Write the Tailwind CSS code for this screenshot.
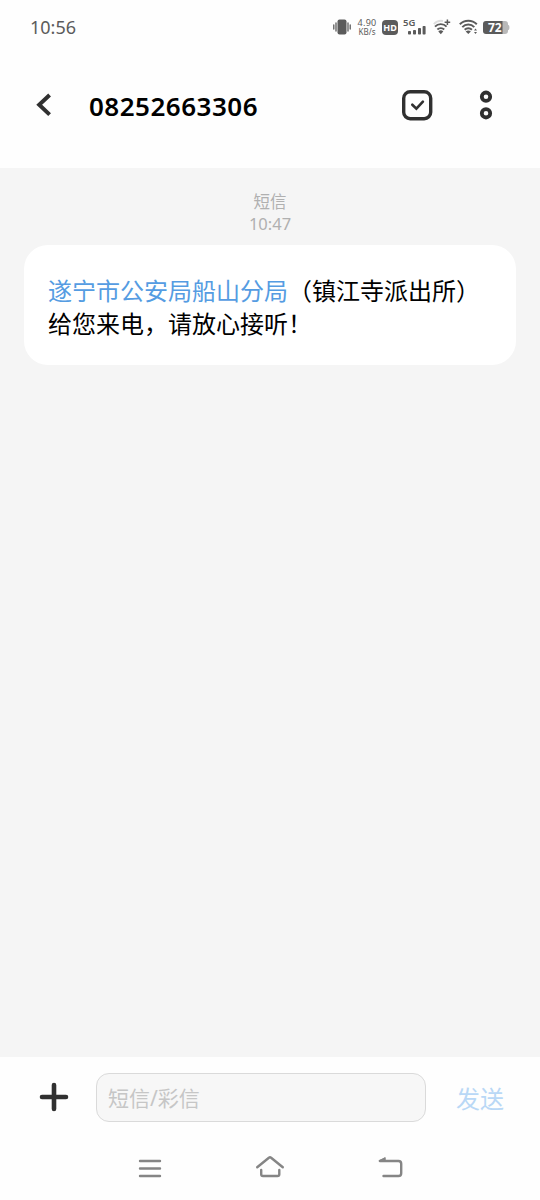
<!DOCTYPE html>
<html lang="zh-CN">
<head>
  <meta charset="UTF-8">
  <meta name="viewport" content="width=device-width, initial-scale=1.0">
  <title>08252663306</title>
  <script src="https://cdn.jsdelivr.net/npm/@tailwindcss/browser@4"></script>
</head>
<body class="bg-[#f5f5f5] font-['Noto_Sans','Noto_Sans_CJK_SC',sans-serif]">
  <div class="w-[540px] h-[1200px] flex flex-col overflow-hidden">

    <!-- status bar + title -->
    <header class="h-[168px] bg-[#fefefe] shrink-0">
      <div class="h-[54px] flex items-center pl-[30px] pr-[30px] text-[#5b5b5b]">
        <span class="text-[18px] leading-none mr-auto">10:56</span>

        <svg class="w-[18px] h-4" viewBox="0 0 18 16" fill="currentColor">
          <rect x="4.5" y="0.5" width="9" height="15" rx="2"/>
          <path d="M3 4v8M.8 6v4M15 4v8M17.2 6v4" stroke="currentColor" stroke-width="1.3" stroke-linecap="round"/>
        </svg>

        <div class="w-5 ml-1.5 flex flex-col items-center text-[9px] leading-[9px] whitespace-nowrap">
          <p class="tracking-[0.3px]">4.90</p>
          <p class="text-[8px]">KB/s</p>
        </div>

        <div class="w-4 h-[15px] ml-[5px] rounded-[4px] bg-[#5b5b5b] text-white text-[9px] font-bold flex items-center justify-center leading-none">HD</div>

        <div class="relative w-[23px] h-4 ml-[5px]">
          <span class="absolute left-0 top-0 text-[9.500px] font-semibold leading-[8px]">5G</span>
          <svg class="w-[23px] h-4" viewBox="0 0 23 16" fill="currentColor">
            <rect x="5" y="12" width="3" height="3.5" rx=".8"/>
            <rect x="10" y="11" width="3" height="4.5" rx=".8"/>
            <rect x="15" y="9" width="3" height="6.5" rx=".8"/>
            <rect x="19.6" y="7" width="3" height="8.5" rx=".8"/>
          </svg>
        </div>

        <svg class="w-[18px] h-4 ml-[7px]" viewBox="0 0 18 16" fill="none" stroke="currentColor" stroke-width="1.9">
          <path d="M.8 5.1A10 10 0 0 1 10 2" stroke="#dedede"/>
          <path d="M2 7.600a8 8 0 0 1 11.600 0M4.400 10.500a4.800 4.800 0 0 1 6.800 0"/>
          <path d="M5.300 12.500a3.600 3.600 0 0 1 5 0L7.800 15.300z" fill="currentColor" stroke="none"/>
          <path d="M14.4.5v5.6M11.6 3.3h5.6" stroke-width="1.5"/>
        </svg>

        <svg class="w-[19px] h-4 ml-2" viewBox="0 0 19 16" fill="none" stroke="currentColor" stroke-width="2">
          <path d="M.8 5.2a12 12 0 0 1 17 0M3.3 8.1a8.4 8.4 0 0 1 12 0M5.7 10.8a5 5 0 0 1 7.2 0"/>
          <path d="M6.7 12.6a4 4 0 0 1 5.2 0L9.3 15z" fill="currentColor" stroke="none"/>
          <path d="M15 11.6l1.5-2 1.5 2zM15 13l1.5 2 1.5-2z" fill="currentColor" stroke="none"/>
        </svg>

        <div class="relative w-[27px] h-[13px] ml-[5px]">
          <svg class="w-[27px] h-[13px]" viewBox="0 0 27 13">
            <path d="M19 0h3a3 3 0 0 1 3 3v.8l1.1.7q.7 2 0 4l-1.1.7v.8a3 3 0 0 1-3 3h-3z" fill="#b9b9b9"/>
            <path d="M3 0h16.500v13H3a3 3 0 0 1-3-3V3a3 3 0 0 1 3-3z" fill="#5b5b5b"/>
          </svg>
          <span class="absolute left-[5px] top-0 text-[12px] font-bold leading-[13px] text-white">72</span>
        </div>
      </div>

      <div class="h-[102px] flex items-center pl-9 pr-[47px] text-[#303030]">
        <svg class="w-4 h-6" viewBox="0 0 16 24" fill="none" stroke="currentColor" stroke-width="4">
          <path d="M13.600 2L3.200 11.800l10.400 9.800"/>
        </svg>
        <h1 class="ml-[37px] mr-auto pt-0.5 text-[26px] leading-none font-semibold tracking-[0.5px] text-black">08252663306</h1>
        <svg class="w-8 h-8 mr-[45px]" viewBox="0 0 32 32" fill="none" stroke="currentColor" stroke-width="3.400">
          <rect x="2.700" y="2.700" width="27" height="27" rx="6.500"/>
          <path d="M11.300 15.700l4.100 4 6.500-7" stroke-width="2.600" stroke-linecap="round"/>
        </svg>
        <svg class="w-4 h-8 mr-[-1px]" viewBox="0 0 16 32" fill="none" stroke="currentColor" stroke-width="3.800">
          <circle cx="8" cy="7.700" r="4.200"/>
          <circle cx="8" cy="24.300" r="4.200"/>
        </svg>
      </div>
    </header>

    <!-- messages -->
    <main class="grow px-6 pt-[23px]">
      <div class="text-center text-[16.500px] leading-[22px] text-[#b0b0b0]">
        <p>短信</p>
        <p>10:47</p>
      </div>
      <div class="mt-2.5 h-[120px] rounded-3xl bg-white px-6 pt-7 font-['Noto_Sans_CJK_SC',sans-serif] text-[24px] leading-[33px] text-black whitespace-nowrap">
        <p><span class="text-[#559ce2]">遂宁市公安局船山分局</span>（镇江寺派出所）</p>
        <p>给您来电，请放心接听！</p>
      </div>
    </main>

    <!-- compose bar -->
    <footer class="h-[143px] bg-[#fefefe] shrink-0">
      <div class="h-[81px] flex items-center pl-[39px] pr-9">
        <svg class="w-[30px] h-[30px] mb-0.5" viewBox="0 0 30 30" stroke="#303030" stroke-width="4.600" stroke-linecap="round">
          <path d="M15 3v24M3 15h24"/>
        </svg>
        <div class="ml-[27px] w-[330px] h-[49px] rounded-[13px] border-[1.500px] border-[#dadada] bg-[#f7f7f7] px-[11px] pt-0.5 flex items-center text-[21px] text-[#c6c6c6]">短信/彩信</div>
        <span class="ml-auto pt-0.5 text-[24px] leading-none text-[#b9d8f6]">发送</span>
      </div>

      <nav class="h-[60px] flex justify-center items-center gap-[90px] text-[#858585]">
        <svg class="w-[30px] h-[30px]" viewBox="0 0 30 30" fill="none" stroke="currentColor" stroke-width="2.400" stroke-linecap="round">
          <path d="M5 8h20M5 15.500h20M5 23h20"/>
        </svg>
        <svg class="w-[30px] h-[30px]" viewBox="0 0 30 30" fill="none" stroke="currentColor" stroke-width="2.400" stroke-linecap="round" stroke-linejoin="round">
          <path d="M2.200 14.300L13.900 4.700q1.100-.8 2.200 0l11.700 9.600M6.200 17v4.200q0 1.800 1.800 1.800h14.500q1.800 0 1.800-1.800V17"/>
        </svg>
        <svg class="w-[30px] h-[30px]" viewBox="0 0 30 30" fill="none" stroke="currentColor" stroke-width="2.400" stroke-linecap="round">
          <path d="M5 8h18.500q2.700 0 2.700 2.700v9.600q0 2.700-2.700 2.700H8.500"/>
          <path d="M4.200 7.600L10.200 4.600v3z" fill="currentColor" stroke-width="1"/>
        </svg>
      </nav>
    </footer>
  </div>
</body>
</html>
